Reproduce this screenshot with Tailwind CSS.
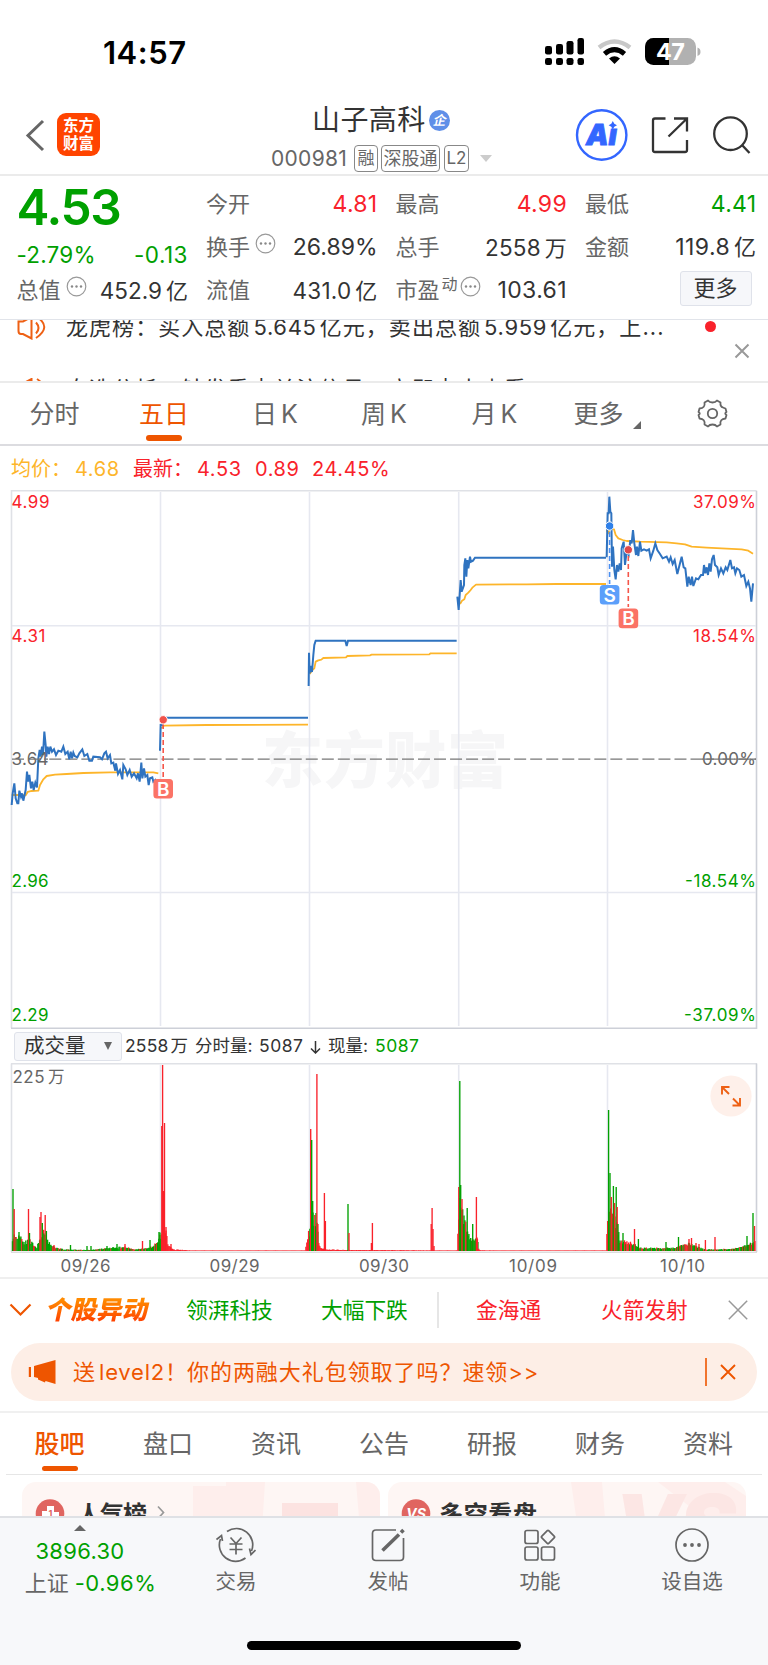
<!DOCTYPE html>
<html lang="zh-CN">
<head>
<meta charset="utf-8">
<title>山子高科 000981</title>
<script src="https://cdn.jsdelivr.net/npm/@tailwindcss/browser@4"></script>
</head>
<body class="bg-white">
<div class="flex h-[1665px] w-[768px] flex-col overflow-hidden bg-white font-['Inter','Noto_Sans_CJK_SC',sans-serif] text-[#333]">

  <!-- status bar -->
  <div class="flex h-[95px] shrink-0 items-start justify-between pl-[103px] pr-[67px]">
    <div class="mt-[32px] text-[31px] leading-[41px] font-semibold tracking-[0.500px] text-black">14:57</div>
    <svg class="mt-[36px] h-[32px] w-[157px]" viewBox="544 36 157 32">
      <g fill="#000">
        <rect x="545" y="46" width="7" height="8.500" rx="2.200"/><rect x="556" y="44" width="7" height="10.500" rx="2.200"/><rect x="566.500" y="41" width="7" height="13.500" rx="2.200"/><rect x="577.500" y="38" width="6.500" height="16.500" rx="2.200"/>
        <rect x="545" y="58" width="7" height="7" rx="2.200"/><rect x="556" y="58" width="7" height="7" rx="2.200"/><rect x="566.500" y="58" width="7" height="7" rx="2.200"/><rect x="577.500" y="58" width="6.500" height="7" rx="2.200"/>
      </g>
      <path d="M599 47.500 Q614.500 35.500 630 47.500" fill="none" stroke="#c8c8c8" stroke-width="4.500"/>
      <path d="M604.500 53.800 Q614.500 45.500 624.500 53.800" fill="none" stroke="#000" stroke-width="5"/>
      <path d="M609 58.500 Q614.500 54 620 58.500 L614.500 64Z" fill="#000"/>
      <clipPath id="bat"><rect x="645" y="38" width="51" height="27" rx="8.500"/></clipPath>
      <g clip-path="url(#bat)"><rect x="645" y="38" width="51" height="27" fill="#b1b1b1"/><rect x="645" y="38" width="24" height="27" fill="#000"/></g>
      <path d="M697.500 47.500 q3 1 3 4.200 t-3 4.200z" fill="#b1b1b1"/>
      <text x="670.500" y="60" text-anchor="middle" font-size="23.500" font-weight="700" fill="#fff" textLength="29">47</text>
    </svg>
  </div>

  <!-- header -->
  <div class="flex h-[81px] shrink-0 border-b-2 border-[#ebebeb]">
    <svg class="mt-[24px] ml-[24px] h-[34px] w-[22px]" viewBox="0 0 22 34" fill="none" stroke="#666" stroke-width="3"><path d="M19 2 L4 16.500 L19 31"/></svg>
    <div class="mt-[18px] ml-[11px] flex h-[43px] w-[43px] flex-col items-center justify-center rounded-[9px] bg-[#ff4400] text-[15.500px] leading-[17.500px] font-bold text-white"><span>东方</span><span>财富</span></div>
    <div class="ml-[171px] flex w-[222px] flex-col">
      <div class="flex h-[50px] items-center pl-[41px]">
        <span class="text-[28px] leading-[40px] tracking-[0.400px]">山子高科</span>
        <span class="ml-[3px] flex h-[21px] w-[21px] items-center justify-center rounded-full bg-[#5f8fe8] text-[13px] leading-[20px] font-bold text-white italic">企</span>
      </div>
      <div class="flex h-[27px] items-center text-[18px] leading-[25px] text-[#666]">
        <span class="w-[83px] text-[21px] tracking-[0.300px]">000981</span>
        <span class="flex h-[27px] w-[24px] items-center justify-center rounded-[4px] border border-[#888] text-[17px]">融</span>
        <span class="ml-[3px] flex h-[27px] w-[59px] items-center justify-center rounded-[4px] border border-[#888]">深股通</span>
        <span class="ml-[4px] flex h-[27px] w-[25px] items-center justify-center rounded-[4px] border border-[#888] text-[17px]">L2</span>
        <span class="ml-[11px] h-0 w-0 border-x-[6px] border-t-[7px] border-x-transparent border-t-[#ccc]"></span>
      </div>
    </div>
    <svg class="mt-[12px] ml-[81px] h-[56px] w-[180px]" viewBox="574 107 180 56" fill="none">
      <circle cx="601.700" cy="135" r="24.700" stroke="#3366ff" stroke-width="2.400"/>
      <text x="586" y="144.500" font-size="29" font-weight="900" font-style="italic" fill="#3366ff" stroke="#3366ff" stroke-width=".8" textLength="31" lengthAdjust="spacingAndGlyphs">Aı</text>
      <path d="M612.800 121 l1.500 2.700 2.700 1.500 -2.700 1.500 -1.500 2.700 -1.500 -2.700 -2.700 -1.500 2.700 -1.500z" fill="#3366ff"/>
      <g stroke="#333" stroke-width="2.300"><path d="M665.500 118.500 H655 Q653 118.500 653 120.500 V150 Q653 152 655 152 H685 Q687 152 687 150 V140"/><path d="M674 118.500 H687 V131.500 M687 118.500 L668.500 136.500"/>
      <circle cx="730.500" cy="133.700" r="16.300"/><path d="M742 145 L749.500 153"/></g>
    </svg>
  </div>

  <!-- quote grid -->
  <div class="grid h-[144px] shrink-0 grid-cols-4 gap-x-[18px] border-b border-[#e1e4ea] pt-[7px] pr-[11.500px] pl-[16.500px] text-[22px] leading-[43px]">
    <div class="flex flex-col">
      <div class="h-[50px] text-[49.500px] leading-[49px] font-semibold tracking-[-1.300px] text-[#00a000]">4.53</div>
      <div class="flex h-[36px] items-center justify-between pt-[6px] text-[22.500px] text-[#00a000]"><span class="tracking-[0.200px]">-2.79%</span><span class="tracking-[0.500px]">-0.13</span></div>
      <div class="flex h-[43px] items-center justify-between"><span class="flex items-center text-[#666]">总值<svg class="mb-[9px] ml-[5px] h-[21px] w-[21px]" viewBox="0 0 21 21"><circle cx="10.500" cy="10.500" r="9.300" fill="none" stroke="#999" stroke-width="1.200"/><g fill="#888"><circle cx="6" cy="10.500" r="1.200"/><circle cx="10.500" cy="10.500" r="1.200"/><circle cx="15" cy="10.500" r="1.200"/></g></svg></span><span class="text-[22.500px]">452.9<span class="ml-[4px] text-[22px]">亿</span></span></div>
    </div>
    <div class="flex flex-col">
      <div class="flex h-[43px] justify-between"><span class="text-[#666]">今开</span><span class="text-[23px] tracking-[0.300px] text-[#f9222b]">4.81</span></div>
      <div class="flex h-[43px] justify-between"><span class="flex items-center text-[#666]">换手<svg class="mb-[9px] ml-[5px] h-[21px] w-[21px]" viewBox="0 0 21 21"><circle cx="10.500" cy="10.500" r="9.300" fill="none" stroke="#999" stroke-width="1.200"/><g fill="#888"><circle cx="6" cy="10.500" r="1.200"/><circle cx="10.500" cy="10.500" r="1.200"/><circle cx="15" cy="10.500" r="1.200"/></g></svg></span><span class="text-[23px]">26.89%</span></div>
      <div class="flex h-[43px] justify-between"><span class="text-[#666]">流值</span><span class="text-[22.500px] tracking-[0.200px]">431.0<span class="ml-[4px] text-[22px]">亿</span></span></div>
    </div>
    <div class="flex flex-col">
      <div class="flex h-[43px] justify-between"><span class="text-[#666]">最高</span><span class="text-[23px] tracking-[0.300px] text-[#f9222b]">4.99</span></div>
      <div class="flex h-[43px] justify-between"><span class="text-[#666]">总手</span><span class="text-[22.500px] tracking-[0.200px]">2558<span class="ml-[4px] text-[22px]">万</span></span></div>
      <div class="flex h-[43px] justify-between"><span class="flex items-center text-[#666]">市盈<span class="mb-[14px] ml-[2px] text-[16px] leading-[20px]">动</span><svg class="mb-[9px] ml-[2px] h-[21px] w-[21px]" viewBox="0 0 21 21"><circle cx="10.500" cy="10.500" r="9.300" fill="none" stroke="#999" stroke-width="1.200"/><g fill="#888"><circle cx="6" cy="10.500" r="1.200"/><circle cx="10.500" cy="10.500" r="1.200"/><circle cx="15" cy="10.500" r="1.200"/></g></svg></span><span class="text-[23px] tracking-[0.400px]">103.61</span></div>
    </div>
    <div class="flex flex-col">
      <div class="flex h-[43px] justify-between"><span class="text-[#666]">最低</span><span class="text-[23px] tracking-[0.300px] text-[#00a000]">4.41</span></div>
      <div class="flex h-[43px] justify-between"><span class="text-[#666]">金额</span><span class="text-[23px] tracking-[0.400px]">119.8<span class="ml-[4px] text-[22px]">亿</span></span></div>
      <div class="flex h-[43px] justify-end pr-[5px]"><span class="mt-[2px] flex h-[35px] w-[72px] items-center justify-center rounded-[3px] border border-[#dfe2ea] bg-[#f6f7fa] leading-[33px]">更多</span></div>
    </div>
  </div>

  <!-- rolling notices -->
  <div class="flex h-[63px] shrink-0 overflow-hidden border-b-2 border-[#ebebeb] text-[22px]">
    <div class="-mt-[8px] ml-[17px] flex h-[90px] w-[660px] shrink-0 flex-col gap-[32px] overflow-hidden leading-[30px]">
      <div class="flex shrink-0 items-center"><svg class="mt-[1px] h-[24px] w-[31px] shrink-0" viewBox="0 0 31 24" fill="none" stroke="#ee6014" stroke-width="2"><path d="M1.500 5.500 V15 Q1.500 18 4 18 H6 L14.500 22.500 V1 L6 5.500Z M19 6.500 Q24 12 19 17.500 M20 1 Q35 11 19 22"/></svg><span class="ml-[18px] tracking-[1.050px] whitespace-nowrap">龙虎榜：买入总额<span class="mx-[3px] tracking-[0.700px]">5.645</span>亿元，卖出总额<span class="mx-[3px] tracking-[0.700px]">5.959</span>亿元，上...</span></div>
      <div class="flex shrink-0 items-center"><svg class="mt-[1px] h-[24px] w-[31px] shrink-0" viewBox="0 0 31 24" fill="none" stroke="#ee6014" stroke-width="2"><path d="M1.500 5.500 V15 Q1.500 18 4 18 H6 L14.500 22.500 V1 L6 5.500Z M19 6.500 Q24 12 19 17.500 M20 1 Q35 11 19 22"/></svg><span class="ml-[18px] tracking-[1.050px] whitespace-nowrap">自选分析：触发重点关注信号，立即点击查看</span></div>
    </div>
    <div class="mt-[1px] ml-[28px] h-[11px] w-[11px] rounded-full bg-[#f9222b]"></div>
    <svg class="mt-[22.500px] ml-[18px] h-[16px] w-[16px]" viewBox="0 0 16 16" stroke="#999" stroke-width="2"><path d="M1.500 1.500 L14.500 14.500 M14.500 1.500 L1.500 14.500"/></svg>
  </div>

  <!-- period tabs -->
  <div class="flex h-[63px] shrink-0 border-b-2 border-[#dcdce0] text-[25px] leading-[63.500px] text-[#666]">
    <div class="w-[109px] text-center">分时</div>
    <div class="flex w-[110px] flex-col items-center text-[#ee5500]"><span class="h-[52px]">五日</span><span class="h-[6px] w-[36px] rounded-[3px] bg-[#ee5500]"></span></div>
    <div class="w-[112px] text-center">日<span class="ml-[4px]">K</span></div>
    <div class="w-[106px] text-center">周<span class="ml-[4px]">K</span></div>
    <div class="w-[115px] text-center">月<span class="ml-[4px]">K</span></div>
    <div class="flex w-[110px] justify-center">更多<svg class="mt-[38px] ml-[9px] h-[8px] w-[8px]" viewBox="0 0 8 8"><path d="M8 0V8H0Z" fill="#666"/></svg></div>
    <svg class="mt-[15px] ml-[35px] h-[31px] w-[31px]" viewBox="-15.500 -15.500 31 31" fill="none" stroke="#666" stroke-width="1.800" stroke-linejoin="round"><path d="M-4.500 -13 Q-3 -11 0 -11 Q3 -11 4.500 -13 L8 -11 Q7.500 -7 10.500 -6 Q11.500 -5.500 13 -5 L14 -1.500 Q11.500 0 14 1.500 L13 5 Q7 5.500 8 11 L4.500 13 Q3 11 0 11 Q-3 11 -4.500 13 L-8 11 Q-7 5.500 -13 5 L-14 1.500 Q-11.500 0 -14 -1.500 L-13 -5 Q-7 -5.500 -8 -11Z"/><circle r="4.700"/></svg>
  </div>

  <!-- legend -->
  <div class="flex h-[44px] shrink-0 items-center pt-[1.500px] pl-[11px] text-[20px] leading-[30px] text-[#f9222b]">
    <span class="w-[64px] text-[#fdb52a]">均价：</span><span class="w-[58px] tracking-[0.600px] text-[#fdb52a]">4.68</span>
    <span class="w-[64px]">最新：</span><span class="w-[58px] tracking-[0.600px]">4.53</span><span class="w-[57px] tracking-[0.600px]">0.89</span><span class="tracking-[0.600px]">24.45%</span>
  </div>

  <!-- price chart -->
  <svg class="h-[540px] w-[768px] shrink-0" viewBox="0 490 768 540" fill="none">
    <text x="262" y="783" font-size="61" font-weight="900" fill="#f6f6f7" textLength="246">东方财富</text>
    <g stroke="#e6e8f0" stroke-width="1.600">
      <path d="M11.500 1028 V490.700 H756.500" stroke="#dfe1e6"/><path d="M756.500 490.700 V1028.300 H11" stroke="#cdd0d8"/>
      <path d="M160.500 492V1026 M309.500 492V1026 M458.700 492V1026 M607.500 492V1026 M12 625.700H756 M12 892.500H756"/>
    </g>
    <path d="M49.300 759.200 H756" stroke="#777" stroke-width="1.300" stroke-dasharray="12 4.030"/>
    <g stroke="#fdb52a" stroke-width="1.800" stroke-linejoin="round">
      <path vector-effect="non-scaling-stroke" transform="translate(0 480) scale(.33333)" d="M35 945 60 945 77 946 83 936 95 933 115 932 120 915 130 898 140 888 165 884 200 882 250 879 330 877 460 877 475 880 M484 745 492 737 620 735 924 734"/>
      <path vector-effect="non-scaling-stroke" transform="translate(240 600) scale(.33333)" d="M209 222 217 210 223 205 227 185 235 181 244 179 250 174 318 172 322 168 390 166 395 164 568 163 572 160 650 160"/>
      <path vector-effect="non-scaling-stroke" transform="translate(440 480) scale(.33333)" d="M60 372 66 362 73 358 77 345 85 338 92 330 98 322 108 314 260 313 350 312 498 312 M500 150 505 160 510 145 522 148 527 165 535 175 548 180 560 183 600 185 680 187 710 190 735 193 755 200 800 203 860 206 905 208 925 212 939 221"/>
    </g>
    <g stroke="#2f73c0" stroke-width="2" stroke-linejoin="miter">
      <path vector-effect="non-scaling-stroke" transform="translate(0 480) scale(.33333)" d="M35 975 38 940 43 910 47 955 52 970 55 970 58 932 63 950 66 940 70 962 77 930 81 875 84 905 88 885 93 925 97 905 101 930 106 908 111 922 115 835 119 810 122 830 126 800 129 825 133 755 137 795 139 830 143 800 147 822 151 800 156 815 162 808 168 825 175 812 184 815 190 800 196 822 203 815 208 838 212 815 216 835 220 818 224 828 232 832 238 820 247 808 253 828 262 822 268 842 276 842 280 830 300 832 306 838 313 820 318 815 323 835 330 825 334 850 340 848 346 872 348 850 354 882 360 870 367 898 370 855 377 868 382 885 389 870 395 890 402 880 410 895 414 880 419 905 424 848 427 895 432 865 436 890 442 885 446 915 450 895 457 892 460 905 466 900 472 918 M480 812 482 735 486 735 490 713 924 713"/>
      <path vector-effect="non-scaling-stroke" transform="translate(240 600) scale(.33333)" d="M206 258 207 158 209 220 212 198 216 216 220 165 223 135 227 122 316 122 320 138 324 122 650 122"/>
      <path vector-effect="non-scaling-stroke" transform="translate(440 480) scale(.33333)" d="M52 350 56 390 59 345 62 300 65 335 72 315 73 255 76 235 79 290 82 240 85 265 90 230 93 245 99 242 105 233 498 233 M500 232 503 100 506 100 508 50 511 95 514 100 516 260 519 200 523 270 527 298 531 255 535 275 539 250 543 270 545 205 551 185 555 255 560 215 566 225 571 180 575 190 579 150 583 190 588 225 591 200 595 228 600 185 604 212 612 208 620 212 627 208 632 235 640 212 646 190 652 210 660 222 668 235 680 230 687 245 692 232 698 252 704 240 712 282 717 262 725 230 731 262 736 265 742 320 746 290 752 315 756 290 760 318 768 295 775 298 783 285 789 285 792 255 796 280 800 262 804 285 808 250 812 275 816 238 821 225 825 255 832 262 836 285 843 265 850 280 857 262 862 270 871 240 876 265 882 262 886 280 891 265 898 270 904 290 912 285 919 318 925 305 930 325 934 365 939 310"/>
    </g>
    <g stroke-width="1.600" stroke-dasharray="5 3"><path d="M163.200 724V778 M628.300 556V607" stroke="#f5564a"/><path d="M609.600 532V584" stroke="#4a90f2"/></g>
    <g stroke="#fff" stroke-width="1"><circle cx="163.200" cy="719.800" r="4.200" fill="#f0524a"/><circle cx="628.300" cy="549.800" r="4.200" fill="#e0484a"/><circle cx="609.600" cy="526" r="4.200" fill="#2f80e8"/></g>
    <rect x="153.400" y="779" width="19.600" height="19.600" rx="3.500" fill="#fb7366"/><rect x="618.600" y="608.600" width="19.600" height="19.600" rx="3.500" fill="#fb7366"/><rect x="599.800" y="585" width="19.600" height="19.600" rx="3.500" fill="#5c9ffa"/>
    <g fill="#fff" font-size="19" font-weight="600" text-anchor="middle"><text x="163.200" y="795.600">B</text><text x="628.400" y="625.300">B</text><text x="609.600" y="601.700">S</text></g>
    <g font-size="17"><g fill="#f9222b"><text x="11.500" y="508" textLength="38">4.99</text><text x="11.500" y="642" textLength="34">4.31</text><text x="693" y="508" textLength="63">37.09%</text><text x="693" y="642" textLength="63">18.54%</text></g>
      <g fill="#666"><text x="11.500" y="765" textLength="37">3.64</text><text x="702" y="765" textLength="54">0.00%</text></g>
      <g fill="#00a000"><text x="11.500" y="887" textLength="37">2.96</text><text x="11.500" y="1021" textLength="37">2.29</text><text x="685" y="887" textLength="71">-18.54%</text><text x="684" y="1021" textLength="72">-37.09%</text></g></g>
    <path d="M12 759.200 H48 M702 759.200 H756" stroke="#777" stroke-width="1.300" stroke-dasharray="12 4"/>
  </svg>

  <!-- volume heading -->
  <div class="flex h-[33px] shrink-0 items-center pb-[1px] pl-[14px] text-[17.500px] leading-[26px]">
    <div class="flex h-[29px] w-[108px] items-center rounded-[3px] border border-[#dfe2ea] bg-[#f6f7fa] pl-[9px] text-[20.500px]"><span class="w-[80px]">成交量</span><svg class="h-[8px] w-[8px]" viewBox="0 0 8 8"><path d="M0 0H8L4 8Z" fill="#666"/></svg></div>
    <span class="ml-[3px] w-[70px] tracking-[0.200px]">2558<span class="ml-[2px]">万</span></span><span class="w-[64px]">分时量:</span><span class="w-[51px] tracking-[0.500px]">5087</span>
    <svg class="mt-[2px] h-[13px] w-[11px]" viewBox="0 0 11 13" fill="none" stroke="#333" stroke-width="1.500"><path d="M5.500 0V12 M1 7.500L5.500 12L10 7.500"/></svg>
    <span class="ml-[7px] w-[47px]">现量:</span><span class="tracking-[0.500px] text-[#00a000]">5087</span>
  </div>

  <!-- volume chart -->
  <svg class="h-[214px] w-[768px] shrink-0" viewBox="0 1063 768 214" fill="none">
    <g stroke="#e6e8f0" stroke-width="1.600"><path d="M11.500 1063.500V1252 M11 1063.700H757" stroke="#dfe1e6"/><path d="M756.500 1063.500V1252" stroke="#cdd0d8"/><path d="M11 1252.200H757" stroke="#dddddd"/><path d="M160.500 1065V1251 M309.500 1065V1251 M458.700 1065V1251 M607.500 1065V1251"/></g>
    <g id="volume" stroke-width="1.350"></g>
    <g font-size="17" fill="#666"><text x="12.500" y="1082.500" textLength="32">225</text><text x="48" y="1083" font-size="16.500">万</text>
      <g text-anchor="middle"><text x="85.500" y="1271.500" textLength="50">09/26</text><text x="234.500" y="1271.500" textLength="50">09/29</text><text x="384" y="1271.500" textLength="50">09/30</text><text x="533" y="1271.500" textLength="48">10/09</text><text x="682.500" y="1271.500" textLength="45">10/10</text></g></g>
    <circle cx="731" cy="1096" r="20.600" fill="#fef0ea"/>
    <path d="M722 1094.500V1087H729.500 M722.500 1087.500L729 1094 M740 1098V1105.500H732.500 M739.500 1105L733 1098.500" stroke="#ee6014" stroke-width="1.900"/>
  </svg>

  <!-- stock alerts -->
  <div class="flex h-[66px] shrink-0 items-center border-t-2 border-[#efefef] pb-[2px] text-[21.700px] leading-[30px]">
    <svg class="ml-[9px] h-[14px] w-[23px]" viewBox="0 0 23 14" fill="none" stroke="#ee5500" stroke-width="2.200"><path d="M1.500 1.500L11.500 11.500L21.500 1.500"/></svg>
    <span class="ml-[15px] w-[139px] -skew-x-12 bg-gradient-to-b from-[#ff8a00] from-20% to-[#ff4400] to-80% bg-clip-text text-[25.500px] leading-[34px] font-black text-transparent">个股异动</span>
    <span class="w-[135px] text-[#00a000]">领湃科技</span><span class="w-[116px] text-[#00a000]">大幅下跌</span>
    <span class="h-[36px] w-[1.500px] bg-[#e6e6e6]"></span>
    <span class="ml-[37.500px] w-[125px] text-[#f9222b]">金海通</span><span class="w-[127px] text-[#f9222b]">火箭发射</span>
    <svg class="h-[20px] w-[20px]" viewBox="0 0 20 20" stroke="#999" stroke-width="1.500"><path d="M.8 .8L19.200 19.200M19.200 .8L.8 19.200"/></svg>
  </div>

  <!-- promotion banner -->
  <div class="h-[68px] shrink-0 px-[11px]">
    <div class="flex h-[58px] items-center rounded-full bg-[#fdeee6] pl-[17px] text-[22px] leading-[30px] text-[#ee5500]">
      <svg class="mt-[1px] h-[25px] w-[28px]" viewBox="0 0 28 25" fill="#ee5500"><path d="M.8 7H3V17H.8Z M6 6L27.500 0V24L17.500 21L17 22.500L10 19.500V18L6 17Z"/></svg>
      <span class="ml-[17px] w-[26px]">送</span><span class="w-[88px] tracking-[0.800px]">level2！</span><span class="w-[518px] tracking-[0.950px]">你的两融大礼包领取了吗？速领&gt;&gt;</span>
      <span class="h-[28px] w-[1.500px] bg-[#ee5500]/80"></span>
      <svg class="ml-[13px] h-[16px] w-[16px]" viewBox="0 0 16 16" stroke="#ee5500" stroke-width="1.900"><path d="M1 1L15 15M15 1L1 15"/></svg>
    </div>
  </div>

  <!-- content tabs -->
  <div class="h-[64px] shrink-0 border-t-2 border-[#f0f0f0] px-[6px]">
    <div class="grid h-[62px] grid-cols-7 border-b border-[#e6e6e6] text-center text-[25px] leading-[63px] text-[#666]">
      <div class="flex flex-col items-center text-[#ee5500]"><span class="-ml-[1px] h-[53px] font-medium">股吧</span><span class="h-[5px] w-[36px] rounded-[3px] bg-[#ee5500]"></span></div><div>盘口</div><div>资讯</div><div>公告</div><div>研报</div><div>财务</div><div>资料</div>
    </div>
  </div>

  <!-- cards clipped by the bottom bar -->
  <div class="flex h-[41px] shrink-0 gap-[8px] overflow-hidden pt-[7px] pl-[22px]">
    <div class="flex h-[80px] w-[358px] shrink-0 overflow-hidden rounded-[14px] bg-[#fef6f4]">
      <svg class="h-[80px] w-[358px]" viewBox="22 1482 358 80">
        <path d="M193 1486H226V1482H265L262 1530H193Z M356 1482h26v48H360Z" fill="#feeeec"/><path d="M282 1503H338V1540H282Z" fill="#fce3e1"/>
        <circle cx="50" cy="1513.500" r="14.300" fill="#e06560"/><path d="M42 1511h5v-5h7v6h5v12H42z" fill="#fff"/><text x="50.500" y="1517" font-size="9" font-weight="700" text-anchor="middle" fill="#e06560">1</text>
        <text x="77" y="1523" font-size="24" font-weight="700" fill="#333" textLength="70">人气榜</text><path d="M158 1506.500L163.500 1512.500L158 1518.500" stroke="#999" fill="none" stroke-width="1.700"/>
      </svg>
    </div>
    <div class="flex h-[80px] w-[358px] shrink-0 overflow-hidden rounded-[14px] bg-[#fef6f4]">
      <svg class="h-[80px] w-[358px]" viewBox="388 1482 358 80">
        <path d="M571 1482H602L606 1530H578Z M658 1482H690L725 1482 746 1496V1530H720Z" fill="#feeeec"/><text x="614" y="1557" font-size="86" font-weight="900" font-style="italic" fill="#fce6e4" textLength="122">VS</text>
        <circle cx="416" cy="1513.500" r="14.300" fill="#e06560"/><text x="416" y="1519" font-size="14" font-weight="700" font-style="italic" text-anchor="middle" fill="#fff">VS</text>
        <text x="439" y="1523" font-size="24" font-weight="700" fill="#333" textLength="98">多空看盘</text>
      </svg>
    </div>
  </div>

  <!-- bottom navigation -->
  <div class="flex h-[150px] shrink-0 flex-col border-t-2 border-[#dfe1e5] bg-[#f7f8fa]">
    <div class="flex h-[123px] text-[20.500px] leading-[28px] text-[#666]">
      <div class="flex w-[160px] flex-col items-center pt-[7px] text-[22px]"><span class="h-0 w-0 border-x-[6px] border-b-[6px] border-x-transparent border-b-[#666]"></span><span class="mt-[5px] leading-[30px] tracking-[0.300px] text-[#00a000]">3896.30</span><span class="mt-[1.500px] ml-[21px] flex leading-[30px]"><span class="w-[50px]">上证</span><span class="tracking-[0.500px] text-[#00a000]">-0.96%</span></span></div>
      <div class="flex w-[152px] flex-col items-center pt-[7px]"><svg class="h-[40px] w-[40px]" viewBox="-20 -20 40 40" fill="none" stroke="#666" stroke-width="1.700"><path d="M-9 -13.500A16.300 16.300 0 0 1 15.500 6 M19.500 5L15 9.500L13.500 3.500 M9.500 13A16.300 16.300 0 0 1 -15.500 -6 M-19.500 -5.500L-14.500 -9.500L-13.500 -4"/><path d="M-5.500 -7.500L0 -1.500L5.500 -7.500 M0 -1.500V9.500 M-6.500 -1H6.500 M-6.500 4.500H6.500"/></svg><span class="mt-[2.500px]">交易</span></div>
      <div class="flex w-[152px] flex-col items-center pt-[7px]"><svg class="h-[40px] w-[40px]" viewBox="-20 -20 40 40" fill="none" stroke="#666" stroke-width="1.700"><path d="M8 -15H-12Q-15.500 -15 -15.500 -11.500V12Q-15.500 15.500 -12 15.500H12Q15.500 15.500 15.500 12V-7"/><path d="M-5.500 5.500L11 -10.500M13 -12.500L15.500 -15" stroke-width="3.600"/></svg><span class="mt-[2.500px]">发帖</span></div>
      <div class="flex w-[152px] flex-col items-center pt-[7px]"><svg class="h-[40px] w-[40px]" viewBox="-20 -20 40 40" fill="none" stroke="#666" stroke-width="1.700"><rect x="-15" y="-14.500" width="13" height="13" rx="2"/><rect x="-15" y="2" width="13" height="13" rx="2"/><rect x="1.500" y="2" width="13" height="13" rx="2"/><rect x="3" y="-13" width="10" height="10" rx="1" transform="rotate(45 8 -8)"/></svg><span class="mt-[2.500px]">功能</span></div>
      <div class="flex w-[152px] flex-col items-center pt-[7px]"><svg class="h-[40px] w-[40px]" viewBox="-20 -20 40 40" fill="none" stroke="#666" stroke-width="1.700"><circle r="16"/><g fill="#666" stroke="none"><circle cx="-7" r="1.900"/><circle r="1.900"/><circle cx="7" r="1.900"/></g></svg><span class="mt-[2.500px]">设自选</span></div>
    </div>
    <div class="ml-[247px] h-[9px] w-[274px] rounded-full bg-black"></div>
  </div>
</div>

<script>
// Volume profile: [x, height] anchors joined linearly, then individual peaks [x, height, colour].
const profile = [
  [12.5,14],[20,16],[24,9],[30,10],[36,3],[40,10],[44,20],[50,6],[56,3],[65,1.5],[90,1],[110,3],[125,4],[135,1.5],[148,3],[154,5],[158,12],[160,16],
  [166,20],[168,5],[175,1.5],[190,.5],[305,.5],[309,20],[313,34],[317,28],[319,5],[325,1.5],[345,1],[457,.5],[460,50],[464,36],[468,18],[473,10],[477,14],[479,1],[490,.5],[606,.5],
  [608,35],[614,38],[617,25],[620,10],[626,9],[635,7],[640,3],[655,3],[675,3],[685,8],[692,6],[705,1.5],[730,2],[745,5],[755,9]];
const peaks = [
  [13,62,'g'],[14.2,42,'r'],[19,19,'g'],[28.5,42,'r'],[29.5,18,'g'],[40,34,'r'],[41,39,'r'],[42.3,28,'g'],[45.2,36,'r'],[46.4,20,'g'],[54,6,'r'],[70.5,6,'g'],[87,5,'g'],[91,5,'g'],[107,5,'g'],[117,7,'g'],[125,7,'r'],[142.5,10,'r'],[150,11,'g'],[159,19,'g'],
  [161.8,125,'r'],[162.6,186,'r'],[163.5,60,'r'],[164.5,128,'r'],[166,24,'r'],[171,7,'r'],[310.7,122,'r'],[311.7,111,'g'],[312.7,50,'g'],[316,38,'g'],[316.9,177,'r'],[317.9,27,'r'],[324.4,58,'r'],[325.4,30,'r'],[348,47,'g'],[349,18,'r'],[372.4,28,'r'],[371.4,8,'r'],
  [431.2,27,'r'],[432.1,43,'r'],[433,22,'r'],[434,5,'r'],[458.8,64,'r'],[459.8,170,'g'],[460.7,66,'g'],[462,52,'r'],[467.2,43,'g'],[472.7,27,'g'],[476.4,54,'r'],[477.4,12,'r'],
  [607.7,30,'r'],[608.6,141,'g'],[610,78,'g'],[611.3,54,'r'],[613.4,65,'g'],[614.5,48,'r'],[616.2,64,'g'],[617.2,44,'r'],[618,27,'g'],[623,18,'g'],[634.5,22,'r'],[638.4,12,'g'],[666,9,'g'],[678.5,14,'g'],[689,12,'r'],[691.5,13,'r'],[696,8,'r'],[699,7,'r'],[705.4,11,'r'],[715,14,'r'],[747,15,'g'],[753,38,'g'],[754.5,25,'r']];
const colours = { r: '#f9222b', g: '#00a000' };
const layer = document.getElementById('volume');
function bar(x, h, c) {
  const line = document.createElementNS('http://www.w3.org/2000/svg', 'path');
  line.setAttribute('d', 'M' + x.toFixed(1) + ' 1251V' + (1251 - h).toFixed(1));
  line.setAttribute('stroke', colours[c]);
  layer.appendChild(line);
}
let seed = 11;
const rand = () => (seed = (seed * 16807) % 2147483647) / 2147483647;
for (let i = 0; i < profile.length - 1; i++) {
  const [x0, h0] = profile[i], [x1, h1] = profile[i + 1];
  for (let x = x0; x < x1; x += 0.9) {
    const h = h0 + (h1 - h0) * (x - x0) / (x1 - x0);
    const redOnly = (x > 161 && x < 309) || (x > 318 && x < 458) || (x > 478 && x < 607);
    bar(x, Math.max(.5, h * (.7 + rand() * .5)), redOnly || rand() < .3 ? 'r' : 'g');
  }
}
peaks.forEach(p => bar(p[0], p[1], p[2]));
</script>
</body>
</html>
